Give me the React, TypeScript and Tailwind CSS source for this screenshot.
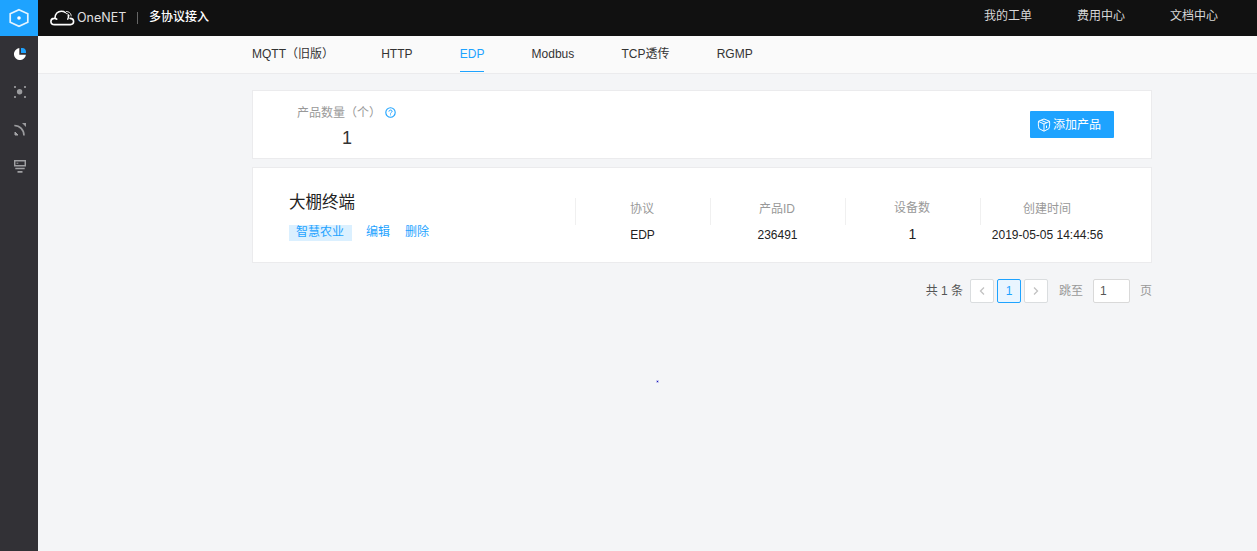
import { useState } from "react";

const topLinks = ["我的工单", "费用中心", "文档中心"];
const tabs = ["MQTT（旧版）", "HTTP", "EDP", "Modbus", "TCP透传", "RGMP"];

const columns = [
  { label: "协议", value: "EDP" },
  { label: "产品ID", value: "236491" },
  { label: "设备数", value: "1", large: true },
  { label: "创建时间", value: "2019-05-05 14:44:56" },
];

function HexIcon() {
  return (
    <svg width="20" height="20" viewBox="0 0 20 20" fill="none">
      <path d="M10 1.700 18.800 5.800v8.400L10 18.300 1.200 14.200V5.800z" stroke="#e4f4ff" strokeWidth="1.700" />
      <circle cx="10" cy="10" r="1.800" fill="#fff" />
    </svg>
  );
}

function CloudLogo() {
  return (
    <svg width="25" height="16" viewBox="0 0 25 16" fill="none" stroke="#fff" strokeLinecap="round">
      <path d="M20 8.400c2.300.1 3.600 1.400 3.600 3.200 0 1.900-1.300 3-3.200 3H4.600c-2.200 0-3.700-1.200-3.700-3.100 0-1.800 1.300-3 3.200-3.100 1-.1 1.900.2 2.600.8" strokeWidth="1.600" />
      <path d="M5 8C5 4 7.800 1.200 11.300 1.200c1.500 0 2.900.4 4 1.300M18.300 5.500c.4 1.300.2 2.600-.5 3.700" strokeWidth="1.500" />
      <path d="M16.500 1.500c2.700.1 4.600 1.900 4.700 4.400M16.300 3.500c1.600.2 2.600 1 2.900 2.300" strokeWidth=".9" strokeDasharray="2.500 .8" />
    </svg>
  );
}

function PieIcon() {
  return (
    <svg width="12" height="12" viewBox="0 0 12 12">
      <path d="M5.300.1V6.700H11.900A6 6 0 1 1 5.300.1z" fill="#fff" />
      <path d="M7 0h1.500A4 4 0 0 1 12 3.500V5H7z" fill="#1ea3ff" />
    </svg>
  );
}

function NodesIcon() {
  return (
    <svg width="12" height="12" viewBox="0 0 12 12" fill="#9b9b9e">
      <circle cx="5.600" cy="5.800" r="2.700" />
      <path d="M0 0h2v2H0zM10 0h2v2h-2zM0 10h2v2H0zM10 10h2v2h-2z" opacity=".85" />
    </svg>
  );
}

function SignalIcon() {
  return (
    <svg width="12" height="13" viewBox="0 0 12 13">
      <path d="M.3 2.500c5.500 0 9.700 4.200 9.700 10" fill="none" stroke="#9b9b9e" strokeWidth="1.700" />
      <path d="M1 9 4 12H1z" fill="#a5a5a8" stroke="#a5a5a8" />
      <path d="M8 0h4v4z" fill="#9b9b9e" />
    </svg>
  );
}

function ServerIcon() {
  return (
    <svg width="12" height="13" viewBox="0 0 12 13" fill="none" stroke="#a0a0a3">
      <path d="M.7.700h10.600v5H.7z" strokeWidth="1.500" />
      <path d="M2.500 3.200h1.800" />
      <path d="M1.300 8.500h9.400M3.500 11.800h5" strokeWidth="1.700" />
    </svg>
  );
}

function HelpIcon() {
  return (
    <svg width="11" height="11" viewBox="0 0 11 11" fill="none" stroke="#1ea3ff">
      <circle cx="5.500" cy="5.500" r="4.700" strokeWidth="1.100" />
      <path d="M3.900 4.600c0-2 3.200-2 3.200-.2 0 1-1.600 1-1.600 2.200M5.500 7.400v.9" />
    </svg>
  );
}

function BoxIcon() {
  return (
    <svg width="14" height="14" viewBox="0 0 14 14" fill="none" stroke="#fff" strokeLinejoin="round">
      <path d="M7 1 12.500 3.200c.3 2.600.2 5-.6 7.400L7 13.200 2.100 10.600C1.300 8.200 1.200 5.800 1.500 3.200z" />
      <path d="M1.500 3.400 7 6l5.500-2.600M7 6v7M4.200 2.300 9.800 4.800M9.500 7.500v2.500" strokeWidth="1" />
    </svg>
  );
}

function Arrow({ d }: { d: string }) {
  return (
    <button className="flex h-6 w-6 items-center justify-center rounded-[2px] border border-[#dadddf] bg-white">
      <svg width="6" height="8" viewBox="0 0 6 8" fill="none" stroke="#c2c2c2" strokeWidth="1.300">
        <path d={d} />
      </svg>
    </button>
  );
}

export default function App() {
  const [active, setActive] = useState("EDP");
  const [page, setPage] = useState("1");

  return (
    <div className="relative flex h-[551px] w-[1257px] overflow-hidden bg-[#f4f5f7] font-['Liberation_Sans','Noto_Sans_CJK_SC',sans-serif] text-xs leading-4 text-[#333]">
      {/* Sidebar */}
      <aside className="flex w-[38px] shrink-0 flex-col items-center bg-[#323136]">
        <div className="flex h-9 w-full items-center justify-center bg-[#1ea3ff] pr-[1px]"><HexIcon /></div>
        <nav className="flex flex-col items-center pl-[2px]">
          <a className="flex h-[37px] items-center pb-[1px]"><PieIcon /></a>
          <a className="flex h-[37px] items-center"><NodesIcon /></a>
          <a className="flex h-[38px] items-center"><SignalIcon /></a>
          <a className="flex h-[37px] items-center"><ServerIcon /></a>
        </nav>
      </aside>

      <div className="flex flex-1 flex-col">
        {/* Header */}
        <header className="flex h-9 shrink-0 items-center bg-[#111] pl-3 pr-[39px]">
          <CloudLogo />
          <span className="ml-[2px] w-[60px] whitespace-nowrap font-[Inter] text-[12.500px] text-[#e0e0e0]">OneNET</span>
          <span className="h-3 w-px bg-[#666]" />
          <span className="ml-[11px] pb-[2px] font-medium text-white">多协议接入</span>
          <div className="ml-auto flex gap-[45px] pb-[4px] text-[#d8d8d8]">
            {topLinks.map((link) => <a key={link}>{link}</a>)}
          </div>
        </header>

        {/* Protocol tabs */}
        <div className="flex h-[38px] shrink-0 gap-[47.200px] border-b border-[#ebebed] bg-[#fafafa] pl-[214px]">
          {tabs.map((tab) => (
            <button
              key={tab}
              onClick={() => setActive(tab)}
              className={`flex h-9 items-start whitespace-nowrap border-b pt-[10px] ${active === tab ? "border-[#1ea3ff] text-[#1ea3ff]" : "border-transparent"}`}
            >
              {tab}
            </button>
          ))}
        </div>

        <main className="ml-[214px] w-[900px] pt-4">
          <section className="flex h-[69px] items-center justify-between border border-[#ebebed] bg-white pl-11 pr-[37px]">
            <div className="w-[100px] pt-[3px]">
              <div className="flex items-center text-[#999]">
                <span className="w-[87.500px] whitespace-nowrap">产品数量（个）</span>
                <HelpIcon />
              </div>
              <div className="mt-[7px] text-center text-lg leading-5">1</div>
            </div>
            <button className="flex h-[27px] w-[84px] items-center rounded-[1px] bg-[#1ea3ff] pl-[7px] text-white">
              <BoxIcon />
              <span className="ml-[2px]">添加产品</span>
            </button>
          </section>

          {/* Product row */}
          <section className="mt-2 flex h-24 border border-[#ebebed] bg-white">
            <div className="w-[322px] pl-9 pt-[22px]">
              <h2 className="text-[16.500px] leading-6 text-[#222]">大棚终端</h2>
              <div className="mt-[10px] flex items-center text-[#1ea3ff]">
                <span className="flex h-4 w-[63px] items-center justify-center bg-[#dbf0ff] pb-[2px] pr-[1px]">智慧农业</span>
                <a className="ml-[14px] pb-[2px]">编辑</a>
                <a className="ml-[15px] pb-[2px]">删除</a>
              </div>
            </div>
            {columns.map((col) => (
              <div key={col.label} className="w-[135px] pt-[30px] text-center">
                <div className="flex h-[27px] justify-center border-l border-[#f0f0f0] pr-[2px] text-[#999]">
                  <span className={col.large ? "pt-[2px]" : "pt-[3px]"}>{col.label}</span>
                </div>
                <div className={`mt-[1px] whitespace-nowrap text-[#222] ${col.large ? "text-sm leading-4" : "pt-[1px]"}`}>{col.value}</div>
              </div>
            ))}
          </section>

          {/* Pagination */}
          <div className="mt-4 flex h-6 items-center justify-end">
            <span className="mr-[7px] whitespace-nowrap text-[#555]">共 1 条</span>
            <Arrow d="M5 .5 1.500 4 5 7.500" />
            <button className="mx-[3px] h-6 w-6 rounded-[2px] border border-[#1ea3ff] bg-[#e9f5ff] text-[#1ea3ff]">1</button>
            <Arrow d="M1 .5 4.500 4 1 7.500" />
            <span className="ml-[11px] text-[#999]">跳至</span>
            <input
              value={page}
              onChange={(e) => setPage(e.target.value)}
              className="ml-[10px] mr-[10px] h-6 w-[37px] rounded-[2px] border border-[#d9d9d9] bg-white px-1.5 text-[#555] outline-none"
            />
            <span className="text-[#999]">页</span>
          </div>
        </main>
      </div>

      <span className="absolute left-[657px] top-[381px] h-px w-px bg-[#1616b8] shadow-[0_0_0_1px_#c9c9ef]" />
    </div>
  );
}
